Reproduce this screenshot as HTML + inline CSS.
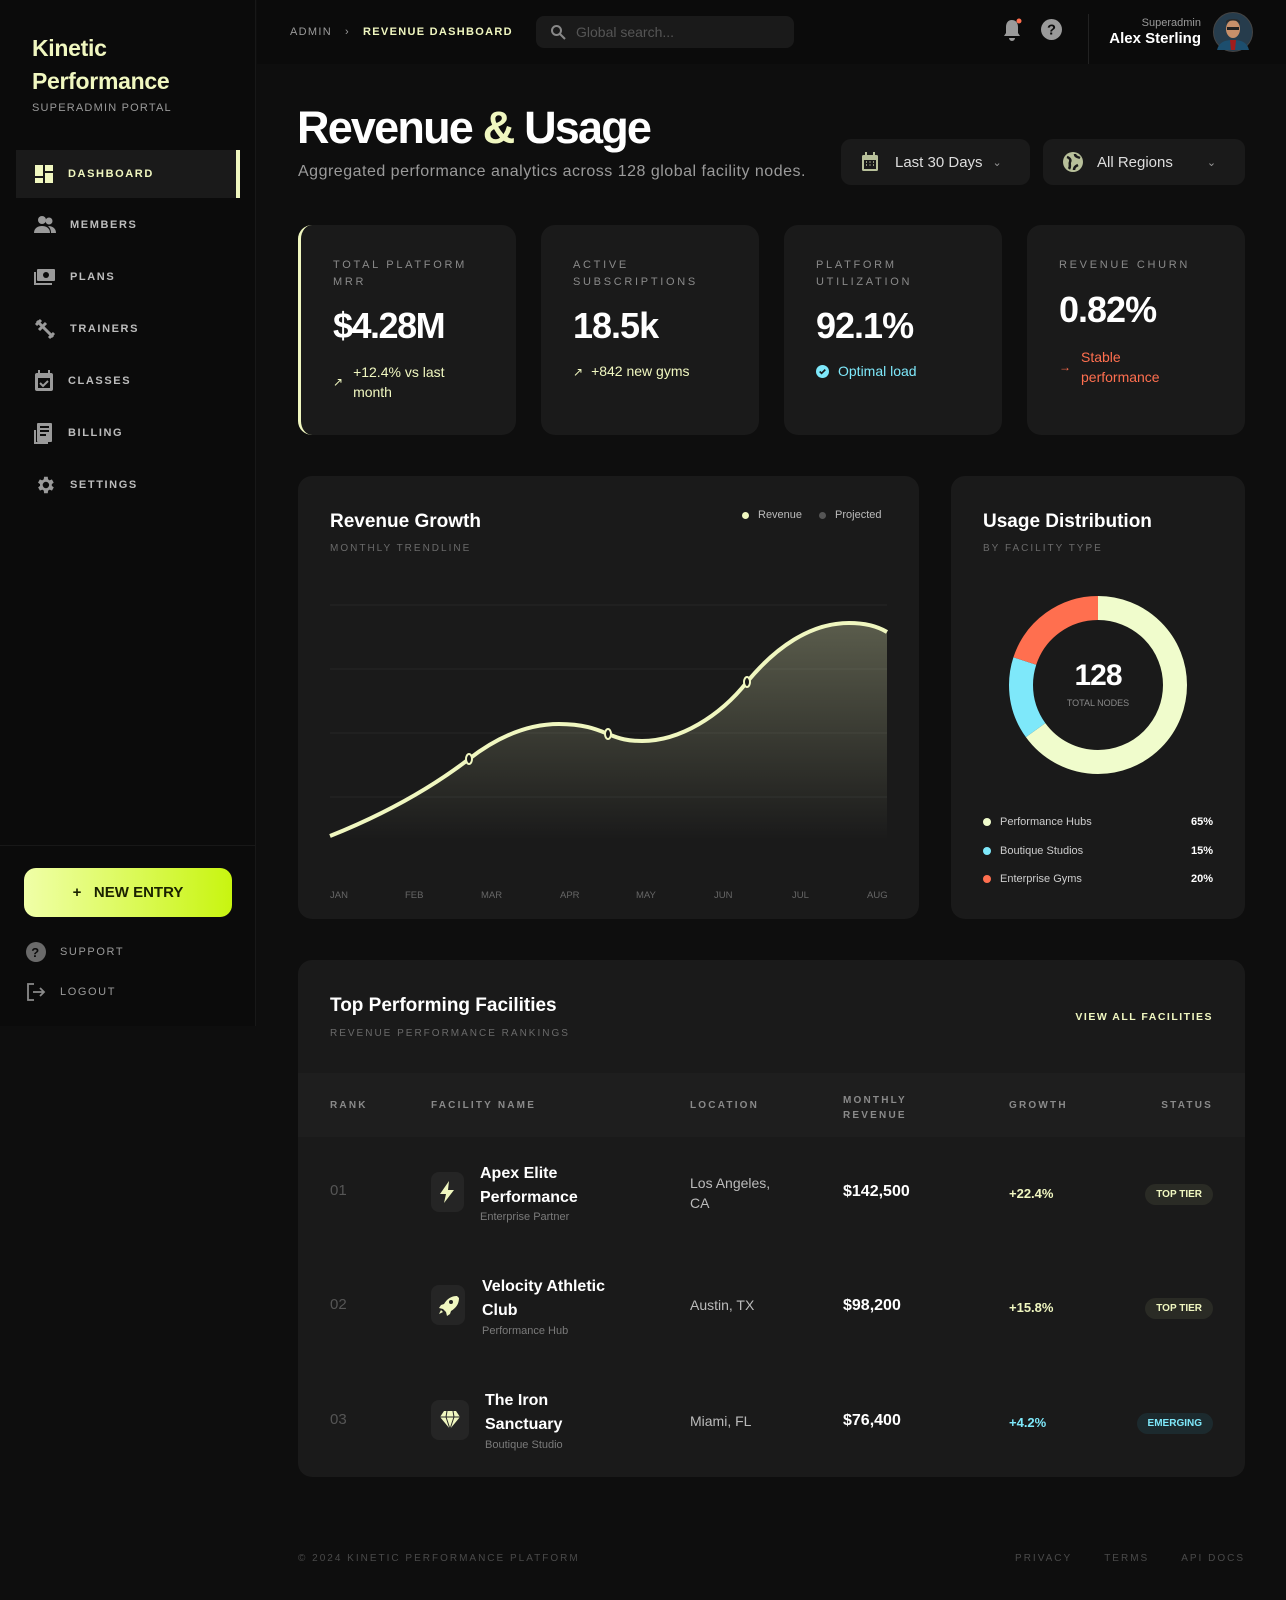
<!DOCTYPE html>
<html><head><meta charset="utf-8"><style>
*{box-sizing:border-box;margin:0;padding:0}
body{width:1286px;height:1600px;background:#0e0e0e;font-family:"Liberation Sans",sans-serif;color:#fff;position:relative;overflow:hidden}
.a{position:absolute}
.side{left:0;top:0;width:256px;height:1026px;background:#0b0b0b;border-right:1px solid #181818}
.nav{left:16px;width:224px;height:48px;display:flex;align-items:center;padding-left:18px;font-size:11px;letter-spacing:1.6px;color:#bdbdbd;font-weight:bold}
.nav svg{margin-right:14px}
.card{background:#1a1a1a;border-radius:14px}
.lbl{font-size:11px;letter-spacing:2.7px;color:#8a8a8a;line-height:17px}
.val{font-size:36px;font-weight:bold;letter-spacing:-1px}
.th{font-size:10px;letter-spacing:2.2px;color:#8a8a8a;font-weight:bold}
.muted{color:#7a7a7a}
.pill{font-size:10px;font-weight:bold;padding:5px 11px;border-radius:12px}
</style></head><body>
<div class="a side"></div>
<div class="a" style="left:32px;top:32px;font-size:23px;font-weight:bold;color:#f0f7c0;line-height:33px;letter-spacing:-0.3px">Kinetic<br>Performance</div>
<div class="a" style="left:32px;top:102px;font-size:11px;letter-spacing:1.2px;color:#9a9a9a">SUPERADMIN PORTAL</div>

<div class="a nav" style="top:150px;background:#1a1a1a;color:#f0f7c0"><svg width="20" height="20" viewBox="0 0 20 20"><path fill="#f0f7c0" d="M1 1h8v11H1zM11 1h8v6h-8zM11 9h8v10h-8zM1 14h8v5H1z"/></svg>DASHBOARD</div>
<div class="a" style="left:236px;top:150px;width:4px;height:48px;background:#f0f7c0"></div>
<div class="a nav" style="top:201px"><svg width="22" height="20" viewBox="0 0 22 20"><circle cx="8" cy="5" r="4" fill="#9a9a9a"/><circle cx="15" cy="6" r="3.5" fill="#9a9a9a"/><path fill="#9a9a9a" d="M0 18c0-5 4-7 8-7s8 2 8 7zM14 11c4 0 8 2 8 7h-5c0-3-1-5-3-7z"/></svg>MEMBERS</div>
<div class="a nav" style="top:253px"><svg width="22" height="20" viewBox="0 0 22 20"><rect x="3" y="2" width="18" height="12" rx="1" fill="#9a9a9a"/><circle cx="12" cy="8" r="3" fill="#0b0b0b"/><path d="M1 5v12h17" stroke="#9a9a9a" stroke-width="2" fill="none"/></svg>PLANS</div>
<div class="a nav" style="top:305px"><svg width="22" height="22" viewBox="0 0 22 22"><path d="M3 3l16 16M2 7l5-5M15 20l5-5M5 12l7-7" stroke="#9a9a9a" stroke-width="3" fill="none"/></svg>TRAINERS</div>
<div class="a nav" style="top:357px"><svg width="20" height="22" viewBox="0 0 20 22"><rect x="1" y="3" width="18" height="18" rx="2" fill="#9a9a9a"/><rect x="4" y="8" width="12" height="10" fill="#0b0b0b"/><path d="M6 13l3 3 5-5" stroke="#9a9a9a" stroke-width="2" fill="none"/><path d="M5 0v4M15 0v4" stroke="#9a9a9a" stroke-width="2"/></svg>CLASSES</div>
<div class="a nav" style="top:409px"><svg width="20" height="22" viewBox="0 0 20 22"><rect x="3" y="1" width="15" height="19" rx="1" fill="#9a9a9a"/><path d="M6 5h9M6 9h9M6 13h6" stroke="#0b0b0b" stroke-width="2"/><path d="M1 8v13h13" stroke="#9a9a9a" stroke-width="2" fill="none"/></svg>BILLING</div>
<div class="a nav" style="top:461px"><svg width="22" height="22" viewBox="0 0 24 24"><path fill="#9a9a9a" d="M19.4 13a7.5 7.5 0 000-2l2.1-1.6-2-3.5-2.5 1a7 7 0 00-1.7-1L15 3h-4l-.4 2.9a7 7 0 00-1.7 1l-2.5-1-2 3.5L6.6 11a7.5 7.5 0 000 2l-2.1 1.6 2 3.5 2.5-1a7 7 0 001.7 1L11 21h4l.4-2.9a7 7 0 001.7-1l2.5 1 2-3.5zM13 15.5a3.5 3.5 0 110-7 3.5 3.5 0 010 7z"/></svg>SETTINGS</div>

<div class="a" style="left:0;top:845px;width:256px;height:1px;background:#181818"></div>
<div class="a" style="left:24px;top:868px;width:208px;height:49px;border-radius:12px;background:linear-gradient(90deg,#f0ffa8,#c8f510);color:#1a2200;font-size:15px;font-weight:bold;display:flex;align-items:center;justify-content:center">+&nbsp;&nbsp; NEW ENTRY</div>
<div class="a" style="left:26px;top:942px;display:flex;align-items:center;font-size:11px;letter-spacing:1.6px;color:#9a9a9a"><svg width="20" height="20" viewBox="0 0 20 20" style="margin-right:14px"><circle cx="10" cy="10" r="10" fill="#6a6a6a"/><text x="10" y="15" font-size="13" font-weight="bold" text-anchor="middle" fill="#0b0b0b" font-family="Liberation Sans">?</text></svg>SUPPORT</div>
<div class="a" style="left:26px;top:982px;display:flex;align-items:center;font-size:11px;letter-spacing:1.6px;color:#9a9a9a"><svg width="20" height="20" viewBox="0 0 20 20" style="margin-right:14px"><path d="M8 2H2v16h6M7 10h11M14 6l4 4-4 4" stroke="#8a8a8a" stroke-width="1.8" fill="none"/></svg>LOGOUT</div>

<!-- header -->
<div class="a" style="left:257px;top:0;width:1029px;height:64px;background:#0b0b0b"></div>
<div class="a" style="left:290px;top:26px;font-size:11px;letter-spacing:1.3px;color:#9a9a9a">ADMIN&nbsp;&nbsp;&nbsp;›&nbsp;&nbsp;&nbsp;<b style="color:#f0f7c0">REVENUE DASHBOARD</b></div>
<div class="a" style="left:536px;top:16px;width:258px;height:32px;background:#1a1a1a;border-radius:8px;display:flex;align-items:center;padding-left:14px;font-size:14px;color:#555"><svg width="16" height="16" viewBox="0 0 16 16" style="margin-right:10px"><circle cx="6.5" cy="6.5" r="4.5" stroke="#888" stroke-width="2" fill="none"/><path d="M10 10l5 5" stroke="#888" stroke-width="2"/></svg>Global search...</div>
<svg class="a" style="left:1001px;top:18px" width="22" height="24" viewBox="0 0 22 24"><path fill="#9a9a9a" d="M11 2c-4 0-6 3-6 7v6l-2 3h16l-2-3V9c0-4-2-7-6-7zM8 20h6a3 3 0 01-6 0z"/><circle cx="18" cy="3" r="2.5" fill="#ff6f4f"/></svg>
<svg class="a" style="left:1041px;top:19px" width="21" height="21" viewBox="0 0 20 20"><circle cx="10" cy="10" r="10" fill="#9a9a9a"/><text x="10" y="15" font-size="14" font-weight="bold" text-anchor="middle" fill="#0b0b0b" font-family="Liberation Sans">?</text></svg>
<div class="a" style="left:1088px;top:14px;width:1px;height:50px;background:#222"></div>
<div class="a" style="right:85px;top:17px;text-align:right"><div style="font-size:11px;color:#9a9a9a">Superadmin</div><div style="font-size:15px;font-weight:bold;margin-top:1px">Alex Sterling</div></div>
<svg class="a" style="left:1213px;top:12px" width="40" height="40" viewBox="0 0 40 40"><circle cx="20" cy="20" r="19.5" fill="#263c4c" stroke="#444"/><path d="M4 38c2-8 8-10 16-10s14 2 16 10z" fill="#1c4e6e"/><path d="M17 28h6l-1 10h-4z" fill="#a01c1c"/><ellipse cx="20" cy="17" rx="7" ry="9" fill="#c8906a"/><path d="M13 13c0-6 14-6 14 0v-3c0-4-14-4-14 0z" fill="#2a2a2a"/><rect x="14" y="15" width="12" height="3" fill="#222"/></svg>

<!-- title -->
<div class="a" style="left:297px;top:102px;font-size:45px;font-weight:bold;letter-spacing:-1.8px">Revenue <span style="color:#f0f7c0">&amp;</span> Usage</div>
<div class="a" style="left:298px;top:163px;font-size:16px;color:#9a9a9a;letter-spacing:0.5px">Aggregated performance analytics across 128 global facility nodes.</div>
<div class="a card" style="left:841px;top:139px;width:189px;height:46px;border-radius:10px;display:flex;align-items:center;padding-left:20px;font-size:15px;color:#ddd"><svg width="18" height="20" viewBox="0 0 18 20" style="margin-right:16px"><rect x="1" y="3" width="16" height="16" rx="1.5" fill="#b8c09a"/><rect x="3" y="8" width="12" height="9" fill="#1a1a1a"/><path d="M5 0v4M13 0v4" stroke="#b8c09a" stroke-width="2"/><path d="M5 10h1M8.5 10h1M12 10h1M5 13h1M8.5 13h1M12 13h1" stroke="#b8c09a" stroke-width="1.5"/></svg>Last 30 Days<span style="margin-left:10px;color:#999;font-size:11px">&#8964;</span></div>
<div class="a card" style="left:1043px;top:139px;width:202px;height:46px;border-radius:10px;display:flex;align-items:center;padding-left:20px;font-size:15px;color:#ddd"><svg width="20" height="20" viewBox="0 0 20 20" style="margin-right:14px"><circle cx="10" cy="10" r="10" fill="#b8c09a"/><path d="M4 5c3 1 4 3 3 5s1 4-1 7M12 2c0 3 3 3 5 4M11 18c0-3 2-4 4-5" stroke="#1a1a1a" stroke-width="2.5" fill="none"/></svg>All Regions<span style="margin-left:34px;color:#999;font-size:11px">&#8964;</span></div>

<!-- stat cards -->
<div class="a card" style="left:298px;top:225px;width:218px;height:210px;border-left:3px solid #f0f7c0"></div>
<div class="a lbl" style="left:333px;top:257px">TOTAL PLATFORM<br>MRR</div>
<div class="a val" style="left:333px;top:305px;letter-spacing:-1.5px">$4.28M</div>
<div class="a" style="left:333px;top:362px;font-size:14px;color:#f0f7c0;line-height:20px;display:flex"><span style="font-size:12px;margin:10px 10px 0 0">↗</span><span>+12.4% vs last<br>month</span></div>

<div class="a card" style="left:541px;top:225px;width:218px;height:210px"></div>
<div class="a lbl" style="left:573px;top:257px">ACTIVE<br>SUBSCRIPTIONS</div>
<div class="a val" style="left:573px;top:305px">18.5k</div>
<div class="a" style="left:573px;top:363px;font-size:14px;color:#f0f7c0"><span style="font-size:12px;margin-right:8px">↗</span>+842 new gyms</div>

<div class="a card" style="left:784px;top:225px;width:218px;height:210px"></div>
<div class="a lbl" style="left:816px;top:257px">PLATFORM<br>UTILIZATION</div>
<div class="a val" style="left:816px;top:305px">92.1%</div>
<div class="a" style="left:816px;top:363px;font-size:14px;color:#7ee8fa;display:flex;align-items:center"><svg width="13" height="13" viewBox="0 0 14 14" style="margin-right:9px"><circle cx="7" cy="7" r="7" fill="#7ee8fa"/><path d="M4 7l2 2 4-4" stroke="#1a1a1a" stroke-width="1.8" fill="none"/></svg>Optimal load</div>

<div class="a card" style="left:1027px;top:225px;width:218px;height:210px"></div>
<div class="a lbl" style="left:1059px;top:257px">REVENUE CHURN</div>
<div class="a val" style="left:1059px;top:289px">0.82%</div>
<div class="a" style="left:1059px;top:347px;font-size:14px;color:#ff6f4f;line-height:20px;display:flex"><span style="margin:10px 10px 0 0;font-size:12px">→</span><span>Stable<br>performance</span></div>

<!-- chart card -->
<div class="a card" style="left:298px;top:476px;width:621px;height:443px"></div>
<div class="a" style="left:330px;top:511px;font-size:19px;font-weight:bold">Revenue Growth</div>
<div class="a lbl" style="left:330px;top:540px;font-size:10px;letter-spacing:2px;color:#6a6a6a">MONTHLY TRENDLINE</div>
<div class="a" style="left:742px;top:509px;font-size:11px;color:#bbb;display:flex;align-items:center"><span style="width:7px;height:7px;border-radius:50%;background:#f0f7c0;margin-right:9px"></span>Revenue<span style="width:7px;height:7px;border-radius:50%;background:#555;margin:0 9px 0 17px"></span>Projected</div>

<svg class="a" style="left:0;top:0" width="1286" height="1600" viewBox="0 0 1286 1600">
<defs><linearGradient id="g" x1="0" y1="0" x2="0" y2="1"><stop offset="0" stop-color="#f0f7c0" stop-opacity="0.3"/><stop offset="1" stop-color="#f0f7c0" stop-opacity="0"/></linearGradient></defs>
<g stroke="#262626" stroke-width="1"><path d="M330 605H887M330 669H887M330 733H887M330 797H887"/></g>
<path d="M330 836 C390 812 435 785 469 759 C500 735 530 724 559 724 C585 724 598 730 608 734 C620 739 628 741 642 741 C680 741 720 716 747 682 C775 648 810 623 849 623 C865 623 877 626 887 632 L887 840 L330 840Z" fill="url(#g)"/>
<path d="M330 836 C390 812 435 785 469 759 C500 735 530 724 559 724 C585 724 598 730 608 734 C620 739 628 741 642 741 C680 741 720 716 747 682 C775 648 810 623 849 623 C865 623 877 626 887 632" fill="none" stroke="#f0f7c0" stroke-width="4"/>
<g fill="#1a1a1a" stroke="#f0f7c0" stroke-width="2"><ellipse cx="469" cy="759" rx="3" ry="5"/><ellipse cx="608" cy="734" rx="3" ry="5"/><ellipse cx="747" cy="682" rx="3" ry="5"/></g>
<g font-family="Liberation Sans" font-size="9.5" fill="#666"><text x="330" y="898">JAN</text><text x="405" y="898">FEB</text><text x="481" y="898">MAR</text><text x="560" y="898">APR</text><text x="636" y="898">MAY</text><text x="714" y="898">JUN</text><text x="792" y="898">JUL</text><text x="867" y="898">AUG</text></g>
<g transform="rotate(-90 1098 685)" fill="none" stroke-width="24">
<circle cx="1098" cy="685" r="77" stroke="#f0fccc" stroke-dasharray="314.5 1000"/>
<circle cx="1098" cy="685" r="77" stroke="#7ee8fa" stroke-dasharray="0 314.5 72.6 1000"/>
<circle cx="1098" cy="685" r="77" stroke="#ff6f4f" stroke-dasharray="0 387.1 96.8 1000"/>
</g>
</svg>

<!-- usage card -->
<div class="a card" style="left:951px;top:476px;width:294px;height:443px;z-index:-1"></div>
<div class="a" style="left:983px;top:511px;font-size:19px;font-weight:bold">Usage Distribution</div>
<div class="a lbl" style="left:983px;top:540px;font-size:10px;letter-spacing:2px;color:#6a6a6a">BY FACILITY TYPE</div>
<div class="a" style="left:1048px;top:659px;width:100px;text-align:center;font-size:30px;font-weight:bold;letter-spacing:-1px">128</div>
<div class="a" style="left:1048px;top:698px;width:100px;text-align:center;font-size:9px;color:#888">TOTAL NODES</div>
<div class="a" style="left:983px;top:808px;width:230px;font-size:11px;color:#ccc;line-height:28.5px">
<div style="display:flex;align-items:center"><span style="width:8px;height:8px;border-radius:50%;background:#f0fccc;margin-right:9px"></span>Performance Hubs<b style="margin-left:auto;color:#fff">65%</b></div>
<div style="display:flex;align-items:center"><span style="width:8px;height:8px;border-radius:50%;background:#7ee8fa;margin-right:9px"></span>Boutique Studios<b style="margin-left:auto;color:#fff">15%</b></div>
<div style="display:flex;align-items:center"><span style="width:8px;height:8px;border-radius:50%;background:#ff6f4f;margin-right:9px"></span>Enterprise Gyms<b style="margin-left:auto;color:#fff">20%</b></div>
</div>

<!-- table -->
<div class="a card" style="left:298px;top:960px;width:947px;height:517px;overflow:hidden"><div style="position:absolute;left:0;top:113px;width:947px;height:64px;background:#1e1e1e"></div></div>
<div class="a" style="left:330px;top:995px;font-size:19px;font-weight:bold">Top Performing Facilities</div>
<div class="a lbl" style="left:330px;top:1025px;font-size:10px;letter-spacing:2px;color:#6a6a6a">REVENUE PERFORMANCE RANKINGS</div>
<div class="a" style="right:73px;top:1011px;font-size:10.5px;letter-spacing:1.5px;font-weight:bold;color:#f0f7c0">VIEW ALL FACILITIES</div>
<div class="a th" style="left:330px;top:1100px">RANK</div>
<div class="a th" style="left:431px;top:1100px">FACILITY NAME</div>
<div class="a th" style="left:690px;top:1100px">LOCATION</div>
<div class="a th" style="left:843px;top:1093px;line-height:15px">MONTHLY<br>REVENUE</div>
<div class="a th" style="left:1009px;top:1100px">GROWTH</div>
<div class="a th" style="right:73px;top:1100px">STATUS</div>

<div class="a" style="left:330px;top:1182px;font-size:15px;color:#555">01</div>
<div class="a" style="left:431px;top:1172px;width:33px;height:40px;border-radius:8px;background:#252525"></div>
<svg class="a" style="left:438px;top:1181px" width="18" height="22" viewBox="0 0 18 22"><path d="M11 0L2 13h6l-2 9 10-13h-6z" fill="#f0f7c0"/></svg>
<div class="a" style="left:480px;top:1162px;font-size:16px;font-weight:bold;line-height:24px">Apex Elite<br>Performance</div>
<div class="a muted" style="left:480px;top:1211px;font-size:11px">Enterprise Partner</div>
<div class="a" style="left:690px;top:1173px;font-size:14px;color:#bbb;line-height:20px">Los Angeles,<br>CA</div>
<div class="a" style="left:843px;top:1183px;font-size:16px;font-weight:bold">$142,500</div>
<div class="a" style="left:1009px;top:1186px;font-size:13px;font-weight:bold;color:#f0f7c0">+22.4%</div>
<div class="a pill" style="right:73px;top:1184px;background:#2a2b25;color:#f0f7c0">TOP TIER</div>

<div class="a" style="left:330px;top:1296px;font-size:15px;color:#555">02</div>
<div class="a" style="left:431px;top:1285px;width:34px;height:40px;border-radius:8px;background:#252525"></div>
<svg class="a" style="left:437px;top:1294px" width="22" height="22" viewBox="0 0 22 22"><path d="M20 2c-6 0-10 3-13 8l-3 1-2 3 4 1 3 3 1 4 3-2 1-3c5-3 8-7 8-13zM14 6a2 2 0 110 4 2 2 0 010-4zM4 16l-2 4 4-2z" fill="#f0f7c0"/></svg>
<div class="a" style="left:482px;top:1275px;font-size:16px;font-weight:bold;line-height:24px">Velocity Athletic<br>Club</div>
<div class="a muted" style="left:482px;top:1325px;font-size:11px">Performance Hub</div>
<div class="a" style="left:690px;top:1297px;font-size:14px;color:#bbb">Austin, TX</div>
<div class="a" style="left:843px;top:1297px;font-size:16px;font-weight:bold">$98,200</div>
<div class="a" style="left:1009px;top:1300px;font-size:13px;font-weight:bold;color:#f0f7c0">+15.8%</div>
<div class="a pill" style="right:73px;top:1298px;background:#2a2b25;color:#f0f7c0">TOP TIER</div>

<div class="a" style="left:330px;top:1411px;font-size:15px;color:#555">03</div>
<div class="a" style="left:431px;top:1400px;width:38px;height:40px;border-radius:8px;background:#252525"></div>
<svg class="a" style="left:440px;top:1411px" width="20" height="18" viewBox="0 0 20 18"><path d="M4 0h12l4 6-10 12L0 6z" fill="#f0f7c0"/><path d="M0 6h20M7 0l-1 6 4 12 4-12-1-6" stroke="#252525" stroke-width="1" fill="none"/></svg>
<div class="a" style="left:485px;top:1389px;font-size:16px;font-weight:bold;line-height:24px">The Iron<br>Sanctuary</div>
<div class="a muted" style="left:485px;top:1439px;font-size:11px">Boutique Studio</div>
<div class="a" style="left:690px;top:1413px;font-size:14px;color:#bbb">Miami, FL</div>
<div class="a" style="left:843px;top:1412px;font-size:16px;font-weight:bold">$76,400</div>
<div class="a" style="left:1009px;top:1415px;font-size:13px;font-weight:bold;color:#7ee8fa">+4.2%</div>
<div class="a pill" style="right:73px;top:1413px;background:#1c2a2e;color:#7ee8fa">EMERGING</div>

<div class="a" style="left:298px;top:1553px;font-size:10px;letter-spacing:2px;color:#4a4a4a">© 2024 KINETIC PERFORMANCE PLATFORM</div>
<div class="a" style="right:41px;top:1553px;font-size:10px;letter-spacing:2px;color:#4a4a4a;word-spacing:0">PRIVACY<span style="margin-left:32px">TERMS</span><span style="margin-left:32px">API DOCS</span></div>
</body></html>
